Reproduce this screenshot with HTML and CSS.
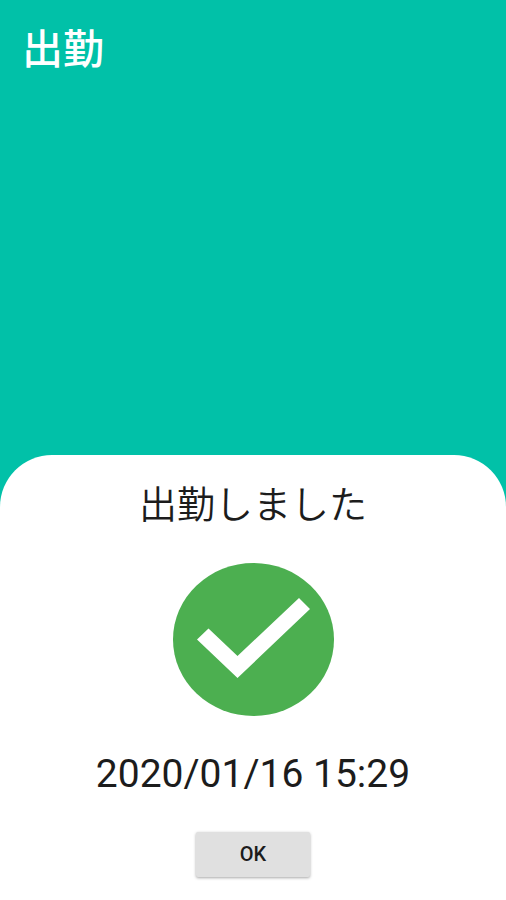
FILE: index.html
```html
<!DOCTYPE html>
<html lang="ja">

<head>
    <meta charset="utf-8">
    <meta name="viewport" content="width=device-width, initial-scale=1">
    <title>出勤</title>
    <link rel="stylesheet" href="styles.css">
</head>

<body>
    <header class="header">
        <h1 class="title">出勤</h1>
    </header>
    <main class="sheet">
        <p class="message">出勤しました</p>
        <svg class="check" viewBox="0 0 162 154" aria-hidden="true">
            <ellipse cx="81.500" cy="76.500" rx="80.500" ry="76.500" fill="#4caf50"/>
            <path d="M25 76.500 L36.500 65.500 L65.500 93 L127 35 L138 46 L65.500 115 Z" fill="#fff"/>
        </svg>
        <time class="time" datetime="2020-01-16T15:29">2020/01/16 15:29</time>
        <button class="ok" type="button">OK</button>
    </main>
</body>

</html>
```

FILE: styles.css
```css
* {
    box-sizing: border-box;
}

body {
    margin: 0;
    min-height: 100vh;
    display: flex;
    flex-direction: column;
    background: #01c1a8;
    color: #1c1c1c;
    font-family: Roboto, "Noto Sans CJK JP", sans-serif;
}

.header {
    flex: 1;
    padding: 20px 22px;
}

.title {
    margin: 0;
    color: #fff;
    font-size: 41px;
    line-height: 60px;
    font-weight: 500;
}

/* 下から出る白いシート */
.sheet {
    display: flex;
    flex-direction: column;
    align-items: center;
    padding: 20px 24px 23px;
    background: #fff;
    border-radius: 52px 52px 0 0;
}

.message {
    margin: 0 0 28px;
    font-size: 38px;
    line-height: 60px;
    font-weight: 350;
}

.check {
    width: 162px;
    height: 154px;
    margin-bottom: 27px;
}

.time {
    margin-bottom: 28px;
    font-size: 39px;
    line-height: 60px;
}

.ok {
    width: 114px;
    height: 45px;
    padding: 0 0 2px;
    border: 0;
    border-radius: 2px;
    background: #e0e0e0;
    color: #1c1c1c;
    font-family: inherit;
    font-size: 20px;
    font-weight: 500;
    box-shadow: 0 1px 3px rgba(0, 0, 0, 0.35);
}
```
